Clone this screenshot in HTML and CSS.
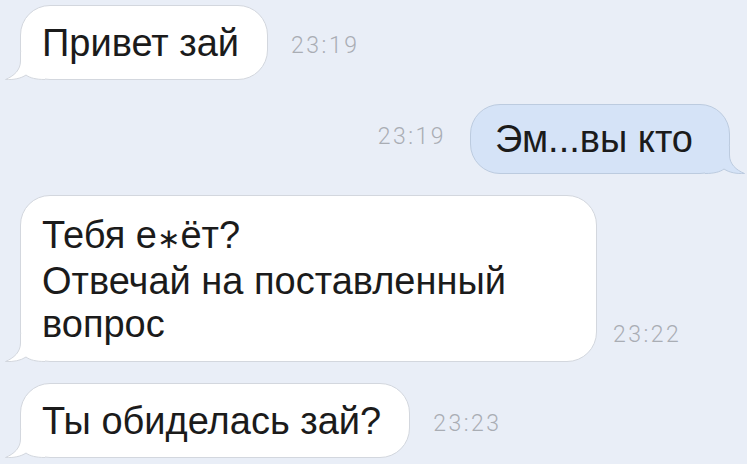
FILE: index.html
```html
<!DOCTYPE html>
<html>
<head>
    <title>Чат</title>
    <meta charset="UTF-8">
    <link rel="stylesheet" href="styles.css">
</head>
<body>
    <div class="chat">
        <div class="row in">
            <div class="bubble b1">
                <svg class="tail" width="40" height="28" viewBox="0 0 40 28"><path class="tail-fill" d="M15.5 0 L15.5 9 C15.5 18 9 24 0.5 27.5 C8 28 16 26.5 21 23 C25 26 31 27.5 40 27.5 L40 0 Z"/><path class="tail-line" d="M15.5 0 L15.5 9 C15.5 18 9 24 0.5 27.5 C8 28 16 26.5 21 23 C25 26 31 27.5 40 27.5"/></svg>
                <span class="text">Привет зай</span>
            </div>
            <span class="time">23:19</span>
        </div>

        <div class="row out">
            <span class="time">23:19</span>
            <div class="bubble b2">
                <svg class="tail" width="40" height="28" viewBox="0 0 40 28"><path class="tail-fill" d="M15.5 0 L15.5 9 C15.5 18 9 24 0.5 27.5 C8 28 16 26.5 21 23 C25 26 31 27.5 40 27.5 L40 0 Z"/><path class="tail-line" d="M15.5 0 L15.5 9 C15.5 18 9 24 0.5 27.5 C8 28 16 26.5 21 23 C25 26 31 27.5 40 27.5"/></svg>
                <span class="text">Эм...вы кто</span>
            </div>
        </div>

        <div class="row in">
            <div class="bubble b3">
                <svg class="tail" width="40" height="28" viewBox="0 0 40 28"><path class="tail-fill" d="M15.5 0 L15.5 9 C15.5 18 9 24 0.5 27.5 C8 28 16 26.5 21 23 C25 26 31 27.5 40 27.5 L40 0 Z"/><path class="tail-line" d="M15.5 0 L15.5 9 C15.5 18 9 24 0.5 27.5 C8 28 16 26.5 21 23 C25 26 31 27.5 40 27.5"/></svg>
                <span class="text">Тебя е<span class="star">∗</span>ёт?<br>Отвечай на поставленный<br>вопрос</span>
            </div>
            <span class="time t3">23:22</span>
        </div>

        <div class="row in">
            <div class="bubble b4">
                <svg class="tail" width="40" height="28" viewBox="0 0 40 28"><path class="tail-fill" d="M15.5 0 L15.5 9 C15.5 18 9 24 0.5 27.5 C8 28 16 26.5 21 23 C25 26 31 27.5 40 27.5 L40 0 Z"/><path class="tail-line" d="M15.5 0 L15.5 9 C15.5 18 9 24 0.5 27.5 C8 28 16 26.5 21 23 C25 26 31 27.5 40 27.5"/></svg>
                <span class="text">Ты обиделась зай?</span>
            </div>
            <span class="time">23:23</span>
        </div>
    </div>
</body>
</html>
```

FILE: styles.css
```css
* { margin: 0; padding: 0; box-sizing: border-box; }
html, body { height: 100%; }
body { background: #e9eef7; overflow: hidden; font-family: 'Liberation Sans', Arial, sans-serif; color: #1b1b1b; }

.chat { padding-top: 5px; display: flex; flex-direction: column; }
.row { display: flex; align-items: flex-end; }
.row.in { padding-left: 20px; }
.row.out { justify-content: flex-end; padding-right: 17px; }

.bubble { position: relative; background: #fff; border: 1px solid #d3d7de; border-radius: 30px; padding: 16px 28px 14px 21px; font-size: 38px; line-height: 43px; }
.out .bubble { background: #d5e3f7; border-color: #bccbdf; padding: 13px 36px 12px 24px; }
.b1 { margin-bottom: 24px; }
.b2 { margin-bottom: 21px; }
.b3 { width: 577px; padding-top: 18px; padding-bottom: 15px; margin-bottom: 21px; }
.text { position: relative; }
.star { font-size: 28px; font-family: 'DejaVu Sans', sans-serif; }

.tail { position: absolute; left: -16px; bottom: -1px; }
.tail-fill { fill: #fff; }
.tail-line { fill: none; stroke: #d3d7de; stroke-width: 1; }
.out .tail { left: auto; right: -16px; transform: scaleX(-1); }
.out .tail-fill { fill: #d5e3f7; }
.out .tail-line { stroke: #bccbdf; }

.time { font-family: Roboto, 'Liberation Sans', sans-serif; font-weight: 300; font-size: 23px; line-height: 22px; letter-spacing: 2.5px; color: #a9adb4; margin: 0 0 23px 23px; }
.b1 + .time { margin-bottom: 47px; }
.out .time { margin: 0 24px 47px 0; }
.t3 { margin-left: 16px; margin-bottom: 37px; }
```
